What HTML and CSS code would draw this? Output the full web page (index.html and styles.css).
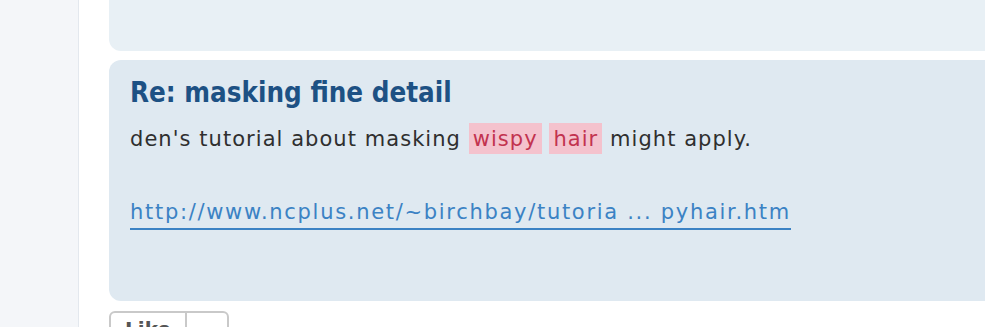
FILE: index.html
```html
<!DOCTYPE html>
<html lang="en">
<head>
    <meta charset="UTF-8">
    <title>Re: masking fine detail</title>
    <link rel="stylesheet" href="styles.css">
</head>
<body>
    <div class="sidebar"></div>
    <div class="main">
        <!-- end of the previous post -->
        <div class="post post-prev"></div>

        <div class="post">
            <h2 class="post-title">Re: masking fine detail</h2>
            <div class="post-body">
                <p>den's tutorial about masking <span class="hl">wispy</span> <span class="hl">hair</span> might apply.</p>
                <p class="post-link"><a href="#">http://www.ncplus.net/~birchbay/tutoria ... pyhair.htm</a></p>
            </div>
        </div>

        <div class="actions">
            <button class="like-btn"><span class="like-label">Like</span><span class="like-count"></span></button>
        </div>
    </div>
</body>
</html>
```

FILE: styles.css
```css
html, body { margin: 0; height: 100%; }
body { display: flex; overflow: hidden; background: #fff; font-family: "DejaVu Sans", Verdana, sans-serif; color: #2f2f2f; }
.sidebar { width: 78px; flex: none; background: #f4f6f9; border-right: 1px solid #e3e8ee; }
.main { flex: 1; padding-left: 30px; }
.post { width: 920px; background: #dfe9f1; border-radius: 12px 0 0 12px; padding: 13px 21px 0; box-sizing: border-box; height: 241px; }
.post-prev { height: 51px; background: #e8f0f5; border-radius: 0 0 0 12px; margin-bottom: 9px; padding: 0; }
.post-title { margin: 0 0 10px; font-family: "DejaVu Sans Condensed", "DejaVu Sans", sans-serif; font-stretch: condensed; font-size: 27.5px; font-weight: bold; color: #1d5184; line-height: 38px; }
.post-body { font-size: 21px; line-height: 36px; letter-spacing: 1.05px; }
.post-body p { margin: 0; }
.hl { background: #f4c2cd; color: #c2334f; padding: 4px 4px 3px; }
.post-link { margin-top: 37px !important; letter-spacing: 1.7px; }
.post-link a { color: #3b82c4; text-decoration: none; border-bottom: 2px solid #3b82c4; padding-bottom: 4px; }
.actions { padding-top: 10px; }
.like-btn { display: flex; height: 34px; padding: 0; background: #fff; border: 2px solid #c9c9c9; border-radius: 6px; font: inherit; font-size: 20px; color: #555; }
.like-label { width: 74px; border-right: 2px solid #c9c9c9; padding-top: 4px; font-weight: bold; }
.like-count { width: 40px; }
```
